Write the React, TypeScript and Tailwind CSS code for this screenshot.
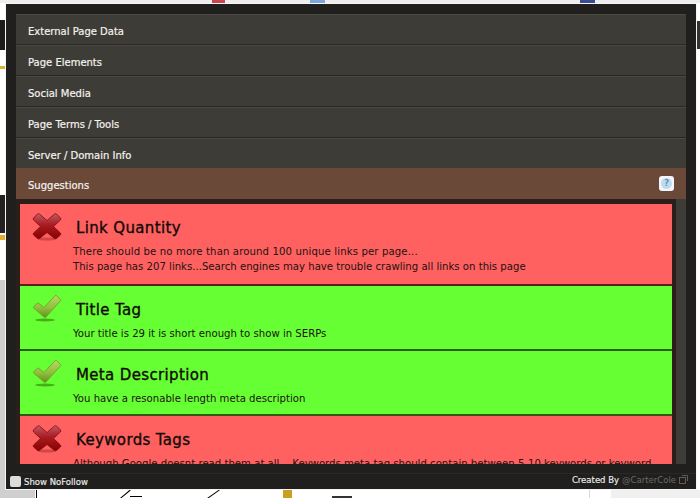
const font = { fontFamily: '"DejaVu Sans", Verdana, sans-serif' };

const sections = ["External Page Data", "Page Elements", "Social Media", "Page Terms / Tools", "Server / Domain Info"];

type Item = { ok: boolean; title: string; lines: string[]; h: string };

const items: Item[] = [
  {
    ok: false,
    title: "Link Quantity",
    lines: [
      "There should be no more than around 100 unique links per page...",
      "This page has 207 links...Search engines may have trouble crawling all links on this page",
    ],
    h: "h-[82px]",
  },
  { ok: true, title: "Title Tag", lines: ["Your title is 29 it is short enough to show in SERPs"], h: "h-[65px]" },
  { ok: true, title: "Meta Description", lines: ["You have a resonable length meta description"], h: "h-[65px]" },
  {
    ok: false,
    title: "Keywords Tags",
    lines: ["Although Google doesnt read them at all... Keywords meta tag should contain between 5-10 keywords or keyword"],
    h: "h-[82px]",
  },
];

function CrossIcon() {
  return (
    <svg width="30" height="30" viewBox="0 0 30 30" className="shrink-0">
      <defs>
        <linearGradient id="crossFill" x1="0" y1="0" x2="0" y2="1">
          <stop offset="0" stopColor="#c25a62" />
          <stop offset="0.45" stopColor="#a81c22" />
          <stop offset="1" stopColor="#8a0000" />
        </linearGradient>
      </defs>
      <ellipse cx="15" cy="27" rx="9" ry="1.6" fill="#a33" opacity="0.55" />
      <path
        d="M7.5 2 L15 8.5 L22.5 2 Q23.5 1.4 24.5 2 L28.5 6 Q29.2 7 28.4 8 L21.5 14.5 L28.4 21 Q29.2 22 28.4 23 L24.5 26.5 Q23.5 27.2 22.5 26.5 L15 20.5 L7.5 26.5 Q6.5 27.2 5.5 26.5 L1.6 23 Q0.8 22 1.6 21 L8.5 14.5 L1.6 8 Q0.8 7 1.5 6 L5.5 2 Q6.5 1.4 7.5 2 Z"
        fill="url(#crossFill)"
        stroke="#7d0a0c"
        strokeWidth="0.8"
      />
    </svg>
  );
}

function CheckIcon() {
  return (
    <svg width="30" height="30" viewBox="0 0 30 30" className="shrink-0">
      <defs>
        <linearGradient id="checkFill" x1="0" y1="0" x2="0" y2="1">
          <stop offset="0" stopColor="#b4da60" />
          <stop offset="0.55" stopColor="#92c040" />
          <stop offset="1" stopColor="#5f9418" />
        </linearGradient>
      </defs>
      <ellipse cx="13" cy="26" rx="10" ry="1.4" fill="#3f9a10" opacity="0.8" />
      <path
        d="M24.5 1.5 L28.6 5.5 Q29 6.3 28.4 7 L14 23 Q13 24 12 23 L1.8 14.2 Q1 13.3 1.8 12.5 L5.2 9.4 Q6 8.8 6.9 9.4 L12 13.5 L23 1.7 Q23.8 1 24.5 1.5 Z"
        fill="url(#checkFill)"
        stroke="#6f9e26"
        strokeWidth="0.8"
      />
    </svg>
  );
}

function Suggestion({ item }: { item: Item }) {
  return (
    <div
      className={`${item.h} shrink-0 border-b-2 ${
        item.ok ? "border-[#2f5a10] bg-[#66ff33]" : "border-[#5c1f1f] bg-[#ff6161]"
      } text-[#1c1210]`}
    >
      <div className="flex h-[36px] items-start pl-[12px] pt-[8px]">
        {item.ok ? <CheckIcon /> : <CrossIcon />}
        <h3 className="ml-[14px] mt-[6px] text-[15px] font-normal leading-[20px] tracking-[0.35px] text-[#120a08] [-webkit-text-stroke:0.35px_#120a08]">
          {item.title}
        </h3>
      </div>
      <div className="pl-[53px] pt-[4px] text-[10.15px] leading-[15px]">
        {item.lines.map((l) => (
          <p key={l} className="whitespace-nowrap [&:first-child:not(:last-child)]:tracking-[0.12px]">
            {l}
          </p>
        ))}
      </div>
    </div>
  );
}

export default function App() {
  return (
    <div className="relative h-[498px] w-[700px] overflow-hidden bg-white pl-[5px] pt-[3px]" style={font}>
      {/* bits of the page behind the popup */}
      <div className="absolute left-0 top-0 h-[3px] w-[700px] bg-[#eeeeee]" />
      <div className="absolute left-[212px] top-0 h-[3px] w-[13px] bg-[#c8464c]" />
      <div className="absolute left-[310px] top-0 h-[3px] w-[15px] bg-[#7aa6dc]" />
      <div className="absolute left-[580px] top-0 h-[3px] w-[15px] bg-[#3c4c94]" />
      <div className="absolute left-0 top-[20px] h-[30px] w-[5px] bg-[#1c1c1c]" />
      <div className="absolute left-0 top-[66px] h-[3px] w-[5px] bg-[#e0b030]" />
      <div className="absolute left-0 top-[195px] h-[38px] w-[5px] bg-[#222]" />
      <div className="absolute left-0 top-[235px] h-[5px] w-[5px] bg-[#e0b030]" />
      <div className="absolute left-0 top-[280px] h-[218px] w-[5px] bg-[#cfcfcf]" />
      <div className="absolute right-0 top-[21px] h-[28px] w-[3px] bg-[#333]" />
      <div className="absolute bottom-0 left-0 h-[8px] w-[35px] bg-[#cfcfcf]" />
      <div className="absolute bottom-0 left-[36px] h-[8px] w-[1px] bg-black" />
      <div className="absolute bottom-[3px] left-[118px] h-[1px] w-[14px] rotate-[-40deg] bg-black" />
      <div className="absolute bottom-[1px] left-[130px] h-[1px] w-[12px] bg-black" />
      <div className="absolute bottom-[3px] left-[205px] h-[1px] w-[16px] rotate-[-35deg] bg-black" />
      <div className="absolute bottom-0 left-[283px] h-[8px] w-[9px] bg-[#c9a020]" />
      <div className="absolute bottom-0 left-[332px] h-[2px] w-[20px] bg-[#333]" />
      <div className="absolute bottom-0 left-[589px] h-[8px] w-[1px] bg-[#d8d8d8]" />
      <div className="absolute bottom-0 left-[611px] h-[8px] w-[89px] bg-[#f0f0f0]" />

      <div className="relative flex h-[487px] w-[692px] flex-col border-[1.5px] border-[#f5f5f5] bg-[#201f1d] pl-[10px] pt-[9.5px]">
        <div className="w-[670px]">
          {sections.map((s) => (
            <div
              key={s}
              className="flex h-[31px] items-center border-y border-t-[#4b4942] border-b-[#292824] bg-[#3e3c37] pl-[12px] pt-[4px] text-[10px] text-[#f4f2ee] [-webkit-text-stroke:0.2px_#f4f2ee]"
            >
              {s}
            </div>
          ))}
          <div className="-mt-px flex h-[31px] items-center justify-between bg-[#6b4939] pl-[12px] pr-[12px] pt-[4px] text-[10px] text-[#f4f2ee] [-webkit-text-stroke:0.2px_#f4f2ee]">
            <span>Suggestions</span>
            <span className="-mt-[4px] flex h-[15px] w-[15px] items-center justify-center rounded-[3px] bg-[#f2f6fa]">
              <span className="flex h-[11px] w-[11px] items-center justify-center rounded-full bg-[#bcdcf0] text-[9px] font-bold leading-none text-[#4d7ea8]">
                ?
              </span>
            </span>
          </div>
        </div>

        <div className="flex h-[265px] w-[670px]">
          <div className="h-full w-[660px] bg-[#2a1f1b] pl-[4px] pt-[5px]">
            <div className="flex h-full w-[652px] flex-col overflow-hidden">
              {items.map((it) => (
                <Suggestion key={it.title} item={it} />
              ))}
            </div>
          </div>
          <div className="h-full w-[10px] bg-[#3e3c37]" />
        </div>

        <div className="mt-[9px] flex flex-1 items-end justify-between border-t border-[#2a2927] pb-[1px] pr-[8px] text-[8.5px]">
          <label className="flex items-end text-[#eeeeee]">
            <span className="-ml-[6px] mb-[1px] h-[11px] w-[11px] rounded-[2px] bg-[#dcdcdc]" />
            <span className="ml-[3px] [-webkit-text-stroke:0.15px_#eeeeee]">Show NoFollow</span>
          </label>
          <span className="mb-[2px] flex items-center text-[#eeeeee]">
            <span className="[-webkit-text-stroke:0.15px_#eeeeee]">Created By</span>
            <span className="ml-[3px] text-[#6b6b68]">@CarterCole</span>
            <svg width="9" height="9" viewBox="0 0 9 9" className="ml-[3px]" fill="none" stroke="#6b6b68" strokeWidth="0.8">
              <rect x="0.5" y="2.5" width="6" height="6" />
              <path d="M3 0.5 H8.5 V6" />
            </svg>
          </span>
        </div>
      </div>
    </div>
  );
}
